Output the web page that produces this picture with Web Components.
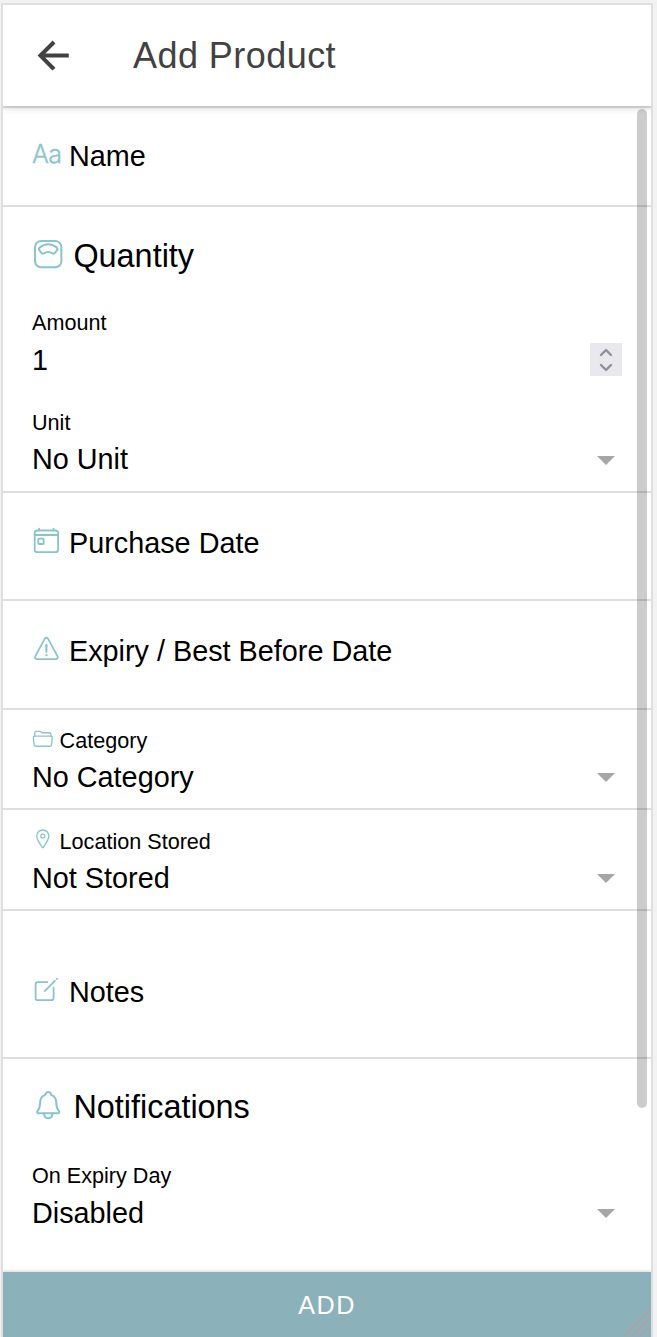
<!DOCTYPE html>
<html lang="en">
<head>
<meta charset="utf-8">
<title>Add Product</title>
<style>
html, body { margin: 0; height: 100%; overflow: hidden; background: #f2f2f2; }
body { font-family: "Liberation Sans", Arial, sans-serif; color: #000; }
</style>
</head>
<body>
<app-frame>
  <app-toolbar slot="header">Add Product</app-toolbar>
  <form-section style="height:101px;padding-top:34px"><icon-label icon="text">Name</icon-label></form-section>
  <form-section style="height:286px;padding-top:31px">
    <icon-label size="heading" icon="scale">Quantity</icon-label>
    <icon-label size="small" style="margin-top:36px">Amount</icon-label>
    <field-value kind="number" style="margin-top:10px">1</field-value>
    <icon-label size="small" style="margin-top:34px">Unit</icon-label>
    <field-value kind="select" style="margin-top:9px;--caret-top:13px">No Unit</field-value>
  </form-section>
  <form-section style="height:108px;padding-top:34px"><icon-label icon="today" style="--dy:-1.4px">Purchase Date</icon-label></form-section>
  <form-section style="height:109px;padding-top:34px"><icon-label icon="warning" style="--dy:-1.4px">Expiry / Best Before Date</icon-label></form-section>
  <form-section style="height:100px;padding-top:18px">
    <icon-label size="small" icon="folder" style="--dy:.3px">Category</icon-label>
    <field-value kind="select" style="margin-top:9px">No Category</field-value>
  </form-section>
  <form-section style="height:101px;padding-top:19px">
    <icon-label size="small" icon="location" style="--dy:-1px">Location Stored</icon-label>
    <field-value kind="select" style="margin-top:9px">Not Stored</field-value>
  </form-section>
  <form-section style="height:148px;padding-top:65px"><icon-label icon="create" style="--dy:-1px">Notes</icon-label></form-section>
  <form-section last style="height:213px;padding-top:30px">
    <icon-label size="heading" icon="bell" style="--dy:-.3px">Notifications</icon-label>
    <icon-label size="small" style="margin-top:38px">On Expiry Day</icon-label>
    <field-value kind="select" style="margin-top:10px">Disabled</field-value>
  </form-section>
  <submit-bar slot="footer">ADD</submit-bar>
</app-frame>

<script>
const component = (name, render) => customElements.define(name, class extends HTMLElement {
  connectedCallback() {
    if (!this.shadowRoot) this.attachShadow({ mode: 'open' }).innerHTML = render(this);
  }
});

const icons = {
  scale: '<rect x="48" y="48" width="416" height="416" rx="96"/><path d="M388.94,151.56c-24.46-22.28-68.72-51.4-132.94-51.4s-108.48,29.12-132.94,51.4a34.66,34.66,0,0,0-3.06,48.08l33.32,39.21a26.07,26.07,0,0,0,33.21,5.21c15.92-9.83,40.91-21.64,69.1-21.64s53.18,11.81,69.1,21.64a26.07,26.07,0,0,0,33.21-5.21L392,199.64A34.66,34.66,0,0,0,388.94,151.56Z"/>',
  today: '<rect x="48" y="80" width="416" height="384" rx="48"/><rect x="112" y="224" width="96" height="96" rx="13"/><path d="M128 48v32M384 48v32M464 160H48"/>',
  warning: '<path d="M85.57,446.25H426.43a32,32,0,0,0,28.17-47.17L284.18,82.58c-12-22.24-44.35-22.24-56.36,0L57.4,399.08A32,32,0,0,0,85.57,446.25Z"/><path d="M250.26,195.39l5.74,122,5.73-121.95a5.74,5.74,0,0,0-5.79-6h0A5.74,5.74,0,0,0,250.26,195.39Z"/><circle cx="256" cy="377" r="20" fill="currentColor" stroke="none"/>',
  folder: '<path d="M64,192V120a40,40,0,0,1,40-40h75.89a40,40,0,0,1,22.19,6.72l27.84,18.56A40,40,0,0,0,252.11,112H408a40,40,0,0,1,40,40v40"/><path d="M479.9,226.55,463.68,392a40,40,0,0,1-39.93,40H88.25a40,40,0,0,1-39.93-40L32.1,226.55A32,32,0,0,1,64,192h384.1A32,32,0,0,1,479.9,226.55Z"/>',
  location: '<path d="M256,48c-79.5,0-144,61.39-144,137,0,87,96,224.87,131.25,272.49a15.77,15.77,0,0,0,25.5,0C304,409.89,400,272.07,400,185,400,109.39,335.5,48,256,48Z"/><circle cx="256" cy="192" r="48"/>',
  create: '<path d="M384,224V408a40,40,0,0,1-40,40H104a40,40,0,0,1-40-40V168a40,40,0,0,1,40-40H271.48"/><g fill="currentColor" stroke="none"><path d="M459.94,53.25a16.06,16.06,0,0,0-23.22-.56L424.35,65a8,8,0,0,0,0,11.31l11.34,11.32a8,8,0,0,0,11.34,0l12.06-12C465.19,69.54,465.76,59.62,459.94,53.25Z"/><path d="M399.34,90,218.82,270.2a9,9,0,0,0-2.31,3.93L208.16,299a3.91,3.91,0,0,0,4.86,4.86l24.85-8.35a9,9,0,0,0,3.93-2.31L422,112.66A9,9,0,0,0,422,100L412.05,90A9,9,0,0,0,399.34,90Z"/></g>',
  bell: '<path d="M427.68,351.43C402,320,383.87,304,383.87,217.35,383.87,138,343.35,109.73,310,96c-4.43-1.82-8.6-6-9.95-10.55C294.2,65.54,277.8,48,256,48S217.79,65.55,212,85.47c-1.35,4.6-5.52,8.71-9.95,10.53-33.39,13.75-73.87,41.92-73.87,121.35C128.13,304,110,320,84.32,351.43,73.68,364.45,83,384,101.61,384H410.49C429,384,438.26,364.39,427.68,351.43Z"/><path d="M320,384v16a64,64,0,0,1-128,0V384"/>'
};

component('app-frame', () => `
  <style>
    :host { display: flex; flex-direction: column; position: relative; box-sizing: border-box; height: 1334px;
      margin: 3px 4px 0 1px; border: 2px solid #dfdfdf; border-bottom: 0; background: #fff; overflow: hidden; }
    main { flex: 1; min-height: 0; overflow: hidden; display: flex; flex-direction: column; }
    .thumb { position: absolute; right: 4px; top: 104px; width: 10px; height: 999px; border-radius: 5px; background: rgba(0,0,0,.2); }
    .grip { position: absolute; right: 1px; bottom: 0; }
  </style>
  <slot name="header"></slot><main><slot></slot></main><slot name="footer"></slot>
  <div class="thumb"></div>
  <svg class="grip" width="27" height="28" viewBox="0 0 27 28" fill="none" stroke="#a9a3a6" stroke-width="2"><path d="M1 27 27 1M9 27 27 9M17 27 27 17"/></svg>`);

component('app-toolbar', () => `
  <style>
    :host { display: flex; align-items: center; height: 101px; flex: none; position: relative; z-index: 1; background: #fff;
      box-shadow: 0 2px 1px rgba(0,0,0,.12), 0 2px 7px rgba(0,0,0,.16);
      color: #424242; font-size: 36px; line-height: 40px; letter-spacing: .45px; }
    svg { width: 43.2px; height: 43.2px; margin: 0 57.4px 0 29.4px; }
    span { padding-top: 1px; }
  </style>
  <svg viewBox="0 0 512 512" fill="none" stroke="currentColor" stroke-width="48" stroke-linecap="square" stroke-miterlimit="10"><path d="M244 400 100 256 244 112M120 256H412"/></svg>
  <span><slot></slot></span>`);

component('form-section', () => `
  <style>
    :host { display: flex; flex-direction: column; flex: none; box-sizing: border-box; padding: 0 29px; border-bottom: 2px solid #dedede; }
    :host([last]) { border-bottom: 0; }
  </style><slot></slot>`);

component('icon-label', el => {
  const icon = el.getAttribute('icon');
  const art = !icon ? '' : icon === 'text'
    ? '<span class="aa">Aa</span>'
    : `<svg viewBox="0 0 512 512" fill="none" stroke="currentColor" stroke-width="32" stroke-linecap="round" stroke-linejoin="round">${icons[icon]}</svg>`;
  return `
  <style>
    :host { display: flex; align-items: flex-start; --box: 28.8px; --gap: 8.2px; font-size: 28.8px; line-height: 32px; height: 32px; white-space: nowrap; }
    :host([size=small]) { --box: 21.6px; --gap: 6px; font-size: 21.6px; line-height: 24px; height: 24px; }
    :host([size=small]) .text { padding-top: 1px; }
    :host([size=heading]) { --box: 32.4px; --gap: 9px; font-size: 32.4px; line-height: 36px; height: 36px; }
    svg, .aa { flex: none; width: var(--box); height: var(--box); margin: var(--dy, -.5px) var(--gap) 0 0; color: #89c5cf; }
    .aa { font: 300 25px/28px Inter, sans-serif; letter-spacing: -.6px; -webkit-text-stroke: .3px #89c5cf; }
  </style>${art}<span class="text"><slot></slot></span>`;
});

component('field-value', el => `
  <style>
    :host { display: flex; justify-content: space-between; font-size: 28.8px; line-height: 32px; height: 32px; }
    .caret { margin: var(--caret-top, 12px) 7px 0 0; }
    .spin { margin-top: -1px; background: #e9e8ed; }
    svg { flex: none; }
  </style><span><slot></slot></span>${el.getAttribute('kind') === 'number'
    ? '<svg class="spin" width="32" height="33" fill="none" stroke="#8f8e9c" stroke-width="2.4" stroke-linecap="round" stroke-linejoin="round"><path d="M11 12 16 7l5 5M11 22l5 5 5-5"/></svg>'
    : '<svg class="caret" width="18" height="9"><path d="M0 0H18L9 9Z" fill="#a6a6a6"/></svg>'}`);

component('submit-bar', () => `
  <style>
    :host { display: flex; justify-content: center; align-items: center; height: 65px; flex: none; position: relative;
      background: #8bb2bb; color: #fff; font-size: 25.2px; line-height: 28px; letter-spacing: 1.5px;
      box-shadow: 0 -1px 3px rgba(0,0,0,.16); }
  </style><slot></slot>`);
</script>
</body>
</html>
